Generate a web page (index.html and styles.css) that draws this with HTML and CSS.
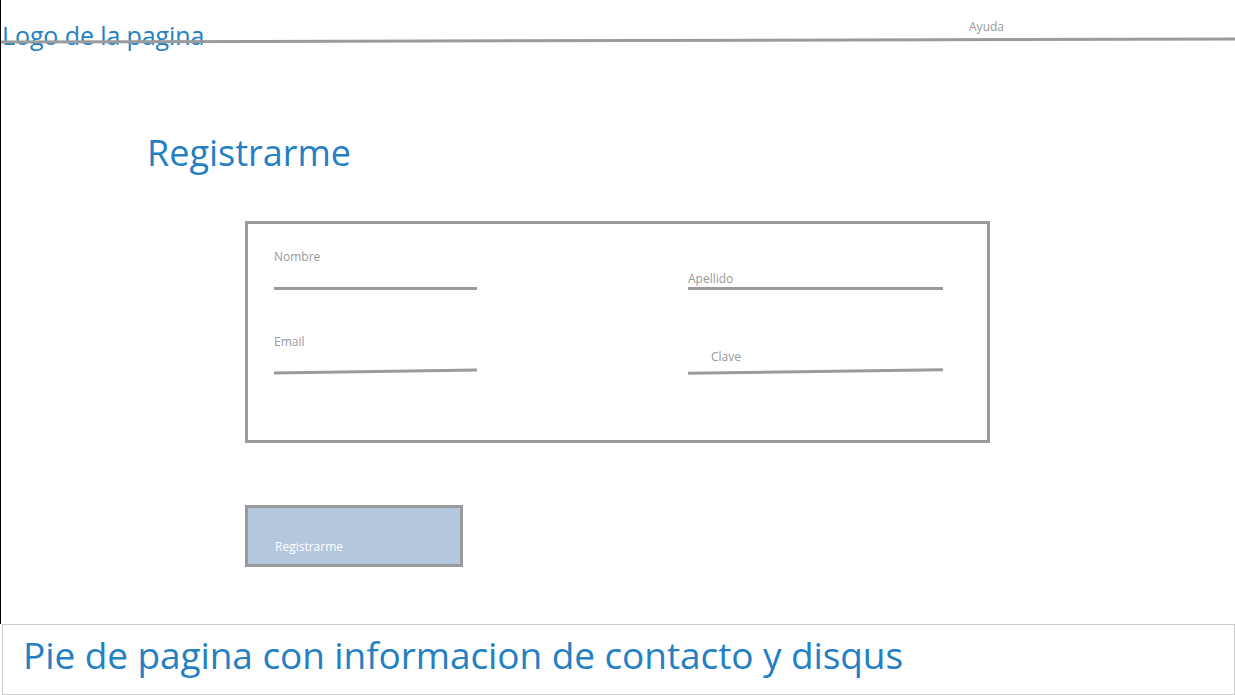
FILE: index.html
```html
<!DOCTYPE html>
<html lang="es">
<head>
  <meta charset="UTF-8">
  <title>Registrarme</title>
  <link rel="stylesheet" href="styles.css">
</head>
<body>
  <div class="page">
    <!-- cabecera -->
    <div class="header">
      <div class="logo">Logo de la pagina</div>
      <div class="help">Ayuda</div>
      <svg class="header-line" viewBox="0 0 1235 8" preserveAspectRatio="none">
        <line x1="0" y1="5" x2="1235" y2="2" stroke="#9a9b9d" stroke-width="3"/>
      </svg>
    </div>

    <h1 class="title">Registrarme</h1>

    <!-- formulario -->
    <form class="form-box">
      <div class="field f-nombre">
        <label>Nombre</label>
        <div class="line"></div>
      </div>
      <div class="field f-apellido">
        <label>Apellido</label>
        <div class="line"></div>
      </div>
      <div class="field f-email">
        <label>Email</label>
        <div class="line slant"></div>
      </div>
      <div class="field f-clave">
        <label>Clave</label>
        <div class="line slant"></div>
      </div>
    </form>

    <button class="btn" type="button">Registrarme</button>
  </div>

  <div class="footer">Pie de pagina con informacion de contacto y disqus</div>
</body>
</html>
```

FILE: styles.css
```css
body { margin: 0; background: #fff; font-family: "Open Sans", "Noto Sans", sans-serif; }
.page { border-left: 1px solid #000; height: 624px; box-sizing: border-box; overflow: hidden; }

.header { position: relative; height: 60px; display: flex; justify-content: space-between; align-items: flex-start; }
.logo { color: #2480c3; font-size: 25px; line-height: 28px; margin: 21px 0 0 1px; letter-spacing: -0.1px; }
.help { color: #999; font-size: 12px; line-height: 16px; margin: 19px 231px 0 0; }
.header-line { position: absolute; left: 0; top: 37px; width: 100%; height: 8px; }

.title { color: #2480c3; font-weight: normal; font-size: 36px; line-height: 40px; margin: 73px 0 0 146px; }

.form-box { margin: 48px 0 0 244px; width: 745px; height: 222px; box-sizing: border-box; border: 3px solid #9a9b9d;
  display: grid; grid-template-columns: 203px 255px; column-gap: 211px; row-gap: 0; padding: 0 0 0 26px; align-content: start; }
.field { display: flex; flex-direction: column; justify-content: flex-end; height: 66px; }
.field label { color: #999; font-size: 12px; line-height: 16px; }
.line { height: 3px; background: #9a9b9d; }
.slant { transform: rotate(-0.8deg); }
.f-nombre label { margin-bottom: 22px; }
.f-apellido label { margin-bottom: 0; }
.f-email, .f-clave { height: 83px; }
.f-email label { margin-bottom: 20px; }
.f-clave label { margin: 0 0 5px 23px; }

.btn { display: block; margin: 62px 0 0 244px; width: 218px; height: 62px; background: #b3c8dc; border: 3px solid #9a9b9d;
  color: #fff; font-family: inherit; font-size: 12px; text-align: left; padding: 21px 0 0 27px; box-sizing: border-box; }

.footer { margin-left: 2px; height: 71px; box-sizing: border-box; border: 1px solid #ccc; color: #2480c3;
  font-size: 37px; line-height: 56px; padding: 2px 0 0 20px; letter-spacing: -0.08px; }
```
